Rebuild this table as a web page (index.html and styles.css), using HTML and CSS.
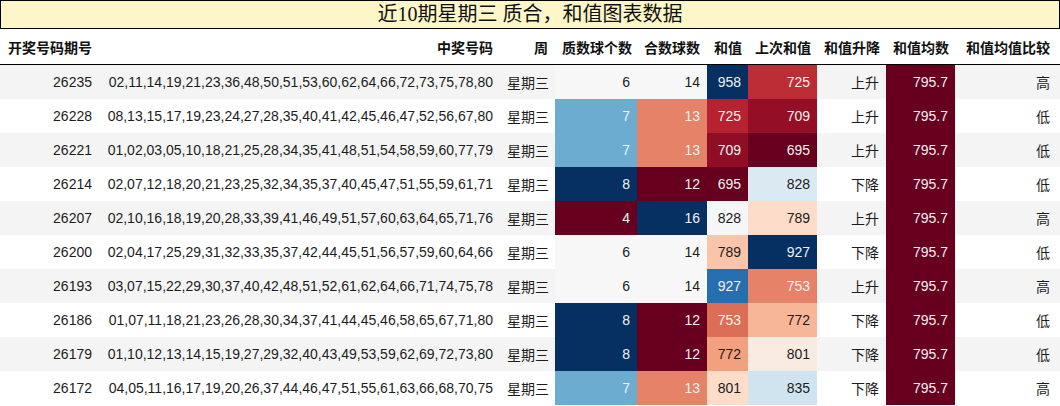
FILE: index.html
```html
<!DOCTYPE html>
<html lang="zh">
<head>
<meta charset="utf-8">
<title>近10期星期三 质合，和值图表数据</title>
<link rel="stylesheet" href="styles.css">
</head>
<body>
<div class="title">近10期星期三 质合，和值图表数据</div>
<table class="data">
  <colgroup>
    <col class="c-id"><col class="c-nums"><col class="c-week"><col class="c-prime"><col class="c-comp"><col class="c-sum"><col class="c-prev"><col class="c-trend"><col class="c-avg"><col class="c-cmp">
  </colgroup>
  <thead>
    <tr><th>开奖号码期号</th><th>中奖号码</th><th>周</th><th>质数球个数</th><th>合数球数</th><th>和值</th><th>上次和值</th><th>和值升降</th><th>和值均数</th><th class="last">和值均值比较</th></tr>
  </thead>
  <tbody>
    <tr><td>26235</td><td>02,11,14,19,21,23,36,48,50,51,53,60,62,64,66,72,73,75,78,80</td><td>星期三</td><td style="background:#f7f7f7">6</td><td style="background:#f7f7f7">14</td><td class="lt" style="background:#053061">958</td><td class="lt" style="background:#bd2d35">725</td><td>上升</td><td class="lt avg">795.7</td><td class="last">高</td></tr>
    <tr><td>26228</td><td>08,13,15,17,19,23,24,27,28,35,40,41,42,45,46,47,52,56,67,80</td><td>星期三</td><td class="lt" style="background:#6bacd0">7</td><td class="lt" style="background:#e58267">13</td><td class="lt" style="background:#b72230">725</td><td class="lt" style="background:#940e26">709</td><td>上升</td><td class="lt avg">795.7</td><td class="last">低</td></tr>
    <tr><td>26221</td><td>01,02,03,05,10,18,21,25,28,34,35,41,48,51,54,58,59,60,77,79</td><td>星期三</td><td class="lt" style="background:#6bacd0">7</td><td class="lt" style="background:#e58267">13</td><td class="lt" style="background:#8f0d25">709</td><td class="lt" style="background:#67001f">695</td><td>上升</td><td class="lt avg">795.7</td><td class="last">低</td></tr>
    <tr><td>26214</td><td>02,07,12,18,20,21,23,25,32,34,35,37,40,45,47,51,55,59,61,71</td><td>星期三</td><td class="lt" style="background:#053061">8</td><td class="lt" style="background:#67001f">12</td><td class="lt" style="background:#67001f">695</td><td style="background:#dbeaf2">828</td><td>下降</td><td class="lt avg">795.7</td><td class="last">低</td></tr>
    <tr><td>26207</td><td>02,10,16,18,19,20,28,33,39,41,46,49,51,57,60,63,64,65,71,76</td><td>星期三</td><td class="lt" style="background:#67001f">4</td><td class="lt" style="background:#053061">16</td><td style="background:#f5f6f7">828</td><td style="background:#fddcc9">789</td><td>上升</td><td class="lt avg">795.7</td><td class="last">高</td></tr>
    <tr><td>26200</td><td>02,04,17,25,29,31,32,33,35,37,42,44,45,51,56,57,59,60,64,66</td><td>星期三</td><td style="background:#f7f7f7">6</td><td style="background:#f7f7f7">14</td><td style="background:#f9c4aa">789</td><td class="lt" style="background:#053061">927</td><td>下降</td><td class="lt avg">795.7</td><td class="last">低</td></tr>
    <tr><td>26193</td><td>03,07,15,22,29,30,37,40,42,48,51,52,61,62,64,66,71,74,75,78</td><td>星期三</td><td style="background:#f7f7f7">6</td><td style="background:#f7f7f7">14</td><td class="lt" style="background:#276eb0">927</td><td class="lt" style="background:#e58267">753</td><td>上升</td><td class="lt avg">795.7</td><td class="last">高</td></tr>
    <tr><td>26186</td><td>01,07,11,18,21,23,26,28,30,34,37,41,44,45,46,58,65,67,71,80</td><td>星期三</td><td class="lt" style="background:#053061">8</td><td class="lt" style="background:#67001f">12</td><td class="lt" style="background:#dc6e58">753</td><td style="background:#f7b698">772</td><td>下降</td><td class="lt avg">795.7</td><td class="last">低</td></tr>
    <tr><td>26179</td><td>01,10,12,13,14,15,19,27,29,32,40,43,49,53,59,62,69,72,73,80</td><td>星期三</td><td class="lt" style="background:#053061">8</td><td class="lt" style="background:#67001f">12</td><td style="background:#f2a07e">772</td><td style="background:#faebe2">801</td><td>下降</td><td class="lt avg">795.7</td><td class="last">低</td></tr>
    <tr><td>26172</td><td>04,05,11,16,17,19,20,26,37,44,46,47,51,55,61,63,66,68,70,75</td><td>星期三</td><td class="lt" style="background:#6bacd0">7</td><td class="lt" style="background:#e58267">13</td><td style="background:#fddcc8">801</td><td style="background:#cfe4ef">835</td><td>下降</td><td class="lt avg">795.7</td><td class="last">高</td></tr>
  </tbody>
</table>
</body>
</html>
```

FILE: styles.css
```css
html, body {
  margin: 0;
  padding: 0;
  background: #ffffff;
}

body {
  width: 1060px;
  font-family: "Liberation Sans", "Noto Sans CJK SC", sans-serif;
  color: #1c1c1c;
}

.title {
  box-sizing: border-box;
  height: 29px;
  border: 1px solid #000;
  background: #fdf6c9;
  text-align: center;
  font-family: "Liberation Serif", "Noto Sans CJK SC", serif;
  font-size: 20px;
  line-height: 27px;
  color: #111;
}

.data {
  width: 1060px;
  table-layout: fixed;
  border-collapse: collapse;
  border-spacing: 0;
  font-size: 14px;
}

.c-id { width: 99px; }
.c-nums { width: 401px; }
.c-week { width: 55px; }
.c-prime { width: 82px; }
.c-comp { width: 70px; }
.c-sum { width: 41px; }
.c-prev { width: 69px; }
.c-trend { width: 69px; }
.c-avg { width: 69px; }
.c-cmp { width: 105px; }

.data th,
.data td {
  padding: 0 7px;
  text-align: right;
  white-space: nowrap;
  overflow: hidden;
}

.data th {
  height: 35px;
  font-weight: bold;
  font-family: "Noto Sans CJK SC", "Liberation Sans", sans-serif;
  color: #111;
  border-bottom: 1px solid #000;
  background: #fff;
}

.data td {
  height: 34px;
}

.data tbody tr:nth-child(odd) {
  background: #f4f4f4;
}

.data tbody tr:nth-child(even) {
  background: #ffffff;
}

.data th.last,
.data td.last {
  padding-right: 10px;
}

.data td.lt {
  color: #f1f1f1;
}

.data td.avg {
  background: #67001f;
}
```
